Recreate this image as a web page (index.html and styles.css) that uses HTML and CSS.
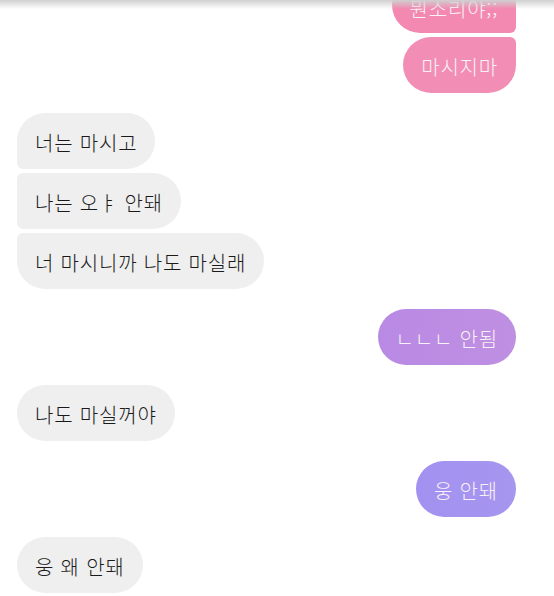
FILE: index.html
```html
<!DOCTYPE html>
<html lang="ko">
<head>
  <meta charset="UTF-8" />
  <title>Chat</title>
  <meta name="viewport" content="width=device-width, initial-scale=1.0"/>
  <link rel="stylesheet" href="styles.css">
</head>
<body>

  <div class="top-shade"></div>

  <div class="chat">
    <div class="group mine">
      <div class="bubble pink first">뭔소리야;;</div>
      <div class="bubble pink2 last">마시지마</div>
    </div>

    <div class="group theirs">
      <div class="bubble gray first">너는 마시고</div>
      <div class="bubble gray mid">나는 오ㅑ 안돼</div>
      <div class="bubble gray last">너 마시니까 나도 마실래</div>
    </div>

    <div class="group mine">
      <div class="bubble violet">ㄴㄴㄴ 안됨</div>
    </div>

    <div class="group theirs">
      <div class="bubble gray">나도 마실꺼야</div>
    </div>

    <div class="group mine">
      <div class="bubble lilac">웅 안돼</div>
    </div>

    <div class="group theirs">
      <div class="bubble gray">웅 왜 안돼</div>
    </div>
  </div>

</body>
</html>
```

FILE: styles.css
```css
body {
  margin: 0;
  background: #fff;
  color: #222;
  font-family: "Noto Sans CJK KR", "Noto Sans", sans-serif;
  overflow: hidden;
}

.top-shade {
  position: fixed;
  top: 0;
  left: 0;
  width: 100%;
  height: 9px;
  background: linear-gradient(#cfcfcf, rgba(255,255,255,0));
  z-index: 5;
}

.chat {
  display: flex;
  flex-direction: column;
  gap: 20px;
  margin-top: -23px;
  padding: 0 38px 0 17px;
}

.group {
  display: flex;
  flex-direction: column;
  gap: 4px;
}
.group.mine { align-items: flex-end; }
.group.theirs { align-items: flex-start; }

.bubble {
  height: 56px;
  line-height: 50px;
  padding: 5px 18px 1px;
  font-size: 20px;
  font-weight: 300;
  letter-spacing: 0.8px;
  border-radius: 28px;
  white-space: nowrap;
  box-sizing: border-box;
}

.gray {
  background: #efefef;
  color: #1a1a1a;
}

.pink, .pink2, .violet, .lilac {
  color: #f8f1f6;
}
.pink { background: #f389b0; padding-top: 7px; }
.pink2 { background: #f28db5; }
.violet { background: linear-gradient(90deg, #b98ae4, #bf8fe2); }
.lilac { background: linear-gradient(90deg, #a291f0, #a796ef); }

/* grouped corner shapes */
.mine .first { border-bottom-right-radius: 6px; }
.mine .last { border-top-right-radius: 6px; }
.theirs .first { border-bottom-left-radius: 6px; }
.theirs .mid { border-top-left-radius: 6px; border-bottom-left-radius: 6px; }
.theirs .last { border-top-left-radius: 6px; }
```
